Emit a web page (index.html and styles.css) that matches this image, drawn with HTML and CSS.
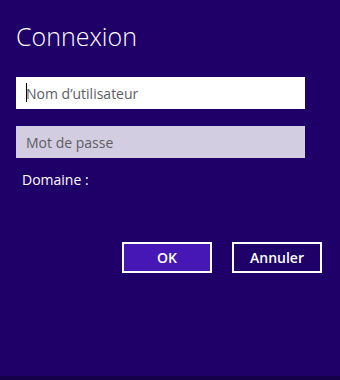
FILE: index.html
```html
<!DOCTYPE html>
<html lang="fr">
<head>
<meta charset="utf-8">
<title>Connexion</title>
<link rel="stylesheet" href="styles.css">
</head>
<body>
<div class="screen">
  <form class="dialog">
    <h1 class="title">Connexion</h1>
    <div class="field field-user">
      <input class="input input-user" type="text" placeholder="Nom d’utilisateur">
      <span class="caret"></span>
    </div>
    <div class="field">
      <input class="input input-pass" type="password" placeholder="Mot de passe">
    </div>
    <div class="domain">Domaine :</div>
    <div class="actions">
      <button type="button" class="btn btn-primary">OK</button>
      <button type="button" class="btn btn-secondary">Annuler</button>
    </div>
  </form>
</div>
<div class="taskbar"></div>
</body>
</html>
```
FILE: styles.css
```css
html, body {
  margin: 0;
  padding: 0;
}
body {
  width: 340px;
  height: 380px;
  background: #1f0068;
  font-family: "Open Sans", "Noto Sans", sans-serif;
  color: #ffffff;
  display: flex;
  flex-direction: column;
  overflow: hidden;
}
.screen {
  flex: 1;
  background: #1f0068;
}
.taskbar {
  height: 4px;
  background: #15004a;
}
.dialog {
  display: flex;
  flex-direction: column;
  padding: 20px 0 0 16px;
}
.title {
  margin: 0;
  font-size: 25px;
  font-weight: 300;
  line-height: 32px;
  letter-spacing: 0;
}
.field {
  position: relative;
  width: 289px;
  height: 32px;
}
.field-user {
  margin-top: 25px;
}
.field + .field {
  margin-top: 17px;
}
.input {
  box-sizing: border-box;
  width: 100%;
  height: 100%;
  border: none;
  outline: none;
  margin: 0;
  padding: 0 10px;
  font-family: "Open Sans", "Noto Sans", sans-serif;
  font-size: 14px;
  color: #000;
}
.input-user {
  background: #ffffff;
}
.input-pass {
  background: #d3cde1;
}
.input::placeholder {
  color: #5d5d64;
  opacity: 1;
}
.caret {
  position: absolute;
  left: 10px;
  top: 6px;
  width: 1px;
  height: 19px;
  background: #000;
}
.domain {
  margin-top: 12px;
  padding-left: 6px;
  font-size: 14px;
  line-height: 20px;
}
.actions {
  display: flex;
  justify-content: flex-end;
  gap: 20px;
  margin-top: 52px;
  padding-right: 18px;
}
.btn {
  box-sizing: border-box;
  width: 90px;
  height: 31px;
  border: 2px solid #ffffff;
  color: #ffffff;
  font-family: "Open Sans", "Noto Sans", sans-serif;
  font-size: 14px;
  font-weight: 600;
  padding: 0;
  margin: 0;
  cursor: pointer;
}
.btn-primary {
  background: #4617b4;
}
.btn-secondary {
  background: #1f0068;
}
```
